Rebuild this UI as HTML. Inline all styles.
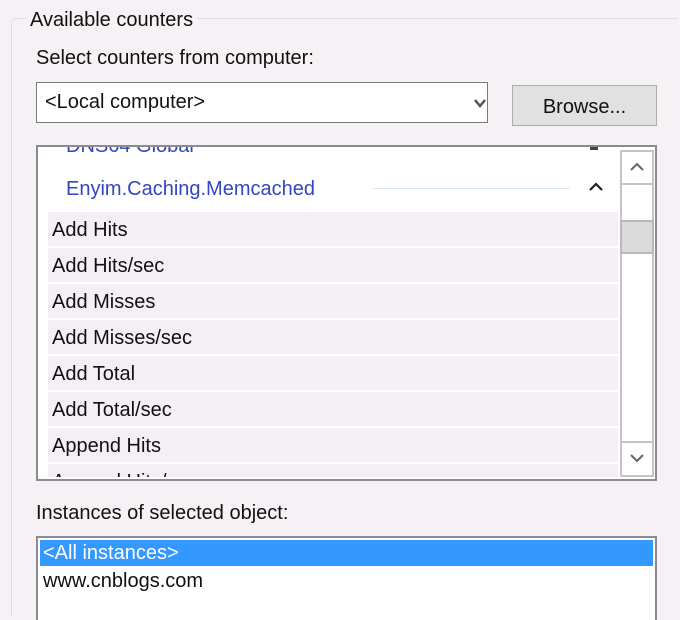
<!DOCTYPE html>
<html style="overflow:hidden;height:620px"><head><style>
body{margin:0;width:680px;height:620px;background:#f5f1f5;font-family:"Liberation Sans",sans-serif;font-size:20px;color:#111;position:relative;overflow:hidden}
.a{position:absolute}
.row{position:absolute;left:48px;width:570px;height:34px;background:#f3eff4;line-height:36px;padding-left:4px;box-sizing:border-box}
</style></head><body>
<div class="a" style="left:11px;top:18px;width:666px;height:598px;border:1px solid #dcdfe6;border-right:none;border-bottom:none;border-radius:5px 0 0 0"></div>
<div class="a" style="left:26px;top:7px;padding:0 4px;background:#f5f1f5;line-height:26px">Available counters</div>
<div class="a" style="left:36px;top:47px">Select counters from computer:</div>
<div class="a" style="left:36px;top:82px;width:442px;height:39px;border:1px solid #7a7a7a;background:#fff;line-height:39px;padding-left:8px;box-sizing:content-box">&lt;Local computer&gt;</div>
<svg class="a" style="left:472px;top:97px" width="16" height="12"><path d="M3 3 L8 9 L13 3" stroke="#555" stroke-width="2.5" fill="none"/></svg>
<div class="a" style="left:512px;top:85px;width:143px;height:39px;border:1px solid #adadad;background:#e1e1e1;text-align:center;line-height:42px">Browse...</div>
<div class="a" style="left:36px;top:145px;width:617px;height:332px;border:2px solid #8a8c94;background:#fff;overflow:hidden">
<div class="a" style="left:28px;top:-12px;color:#3346c0">DNS64 Global</div>
<div class="a" style="left:28px;top:31px;color:#3346c0">Enyim.Caching.Memcached</div>
<div class="a" style="left:334px;top:41px;width:198px;height:1px;background:#dbe6f5"></div>
<svg class="a" style="left:550px;top:34px" width="16" height="12"><path d="M2 9 L8 3 L14 9" stroke="#222" stroke-width="2.2" fill="none"/></svg>
<div class="a" style="left:552px;top:0px;width:8px;height:3px;background:#444"></div>
</div>
<div class="row" style="top:212px">Add Hits</div>
<div class="row" style="top:248px">Add Hits/sec</div>
<div class="row" style="top:284px">Add Misses</div>
<div class="row" style="top:320px">Add Misses/sec</div>
<div class="row" style="top:356px">Add Total</div>
<div class="row" style="top:392px">Add Total/sec</div>
<div class="row" style="top:428px">Append Hits</div>
<div class="row" style="top:464px;height:13px;overflow:hidden">Append Hits/sec</div>
<div class="a" style="left:620px;top:150px;width:30px;height:323px;border:2px solid #c4c4c4;background:#fff"></div>
<div class="a" style="left:620px;top:183px;width:34px;height:2px;background:#c4c4c4"></div>
<div class="a" style="left:620px;top:441px;width:34px;height:2px;background:#c4c4c4"></div>
<div class="a" style="left:620px;top:220px;width:30px;height:30px;border:2px solid #b8b8b8;background:#dadada"></div>
<svg class="a" style="left:629px;top:161px" width="16" height="12"><path d="M2 9 L8 3 L14 9" stroke="#666" stroke-width="2" fill="none"/></svg>
<svg class="a" style="left:629px;top:452px" width="16" height="12"><path d="M2 3 L8 9 L14 3" stroke="#666" stroke-width="2" fill="none"/></svg>
<div class="a" style="left:36px;top:502px">Instances of selected object:</div>
<div class="a" style="left:36px;top:536px;width:617px;height:84px;border:2px solid #8a8c94;border-bottom:none;background:#fff;overflow:hidden">
<div class="a" style="left:2px;top:2px;width:613px;height:26px;background:#3399ff;color:#fff;line-height:26px;padding-left:3px;box-sizing:border-box">&lt;All instances&gt;</div>
<div class="a" style="left:5px;top:30px;line-height:26px">www.cnblogs.com</div>
</div>
</body></html>
